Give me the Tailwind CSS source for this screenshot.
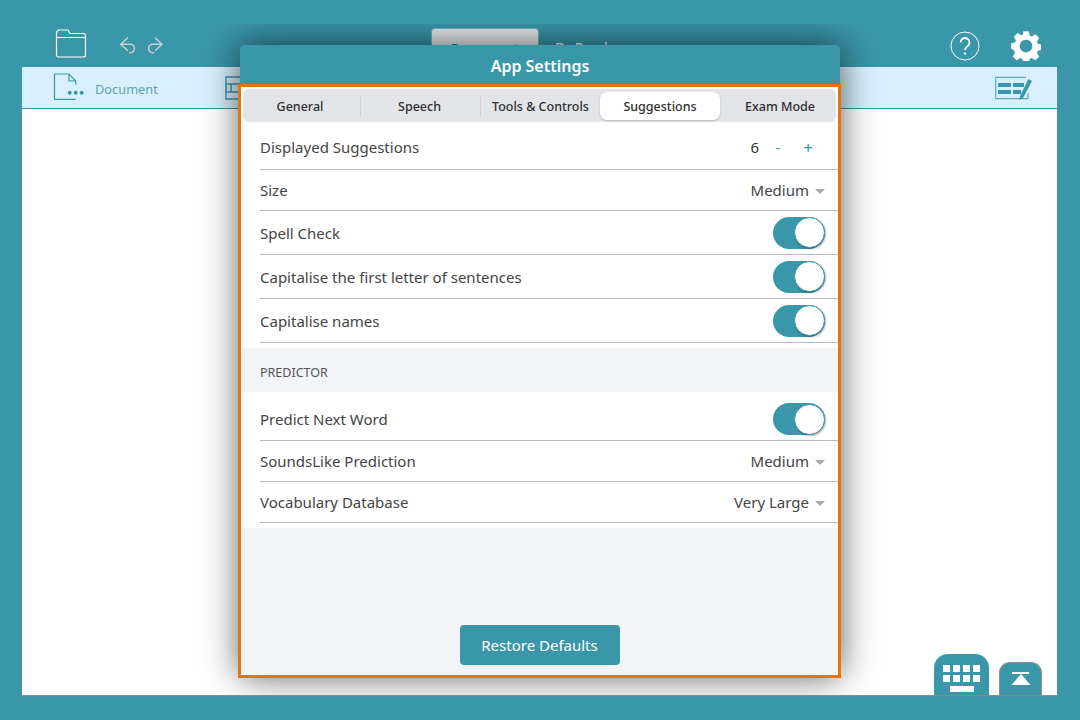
<!DOCTYPE html>
<html lang="en">
<head>
    <meta charset="UTF-8">
    <meta name="viewport" content="width=device-width, initial-scale=1.0">
    <title>App Settings</title>
    <script src="https://cdn.jsdelivr.net/npm/@tailwindcss/browser@4"></script>
</head>
<body class="relative w-[1080px] h-[720px] overflow-hidden bg-[#3a96a9] font-['Noto_Sans','Open_Sans',sans-serif]">
    <!-- App behind the dialog -->
    <header class="h-[67px] flex items-start relative">
        <svg class="absolute left-[55px] top-[29px]" width="32" height="29" viewBox="0 0 32 29" fill="none" stroke="#fff" stroke-width="1.200">
            <path d="M1.500 26V4a3 3 0 0 1 3-3h8.500l2 3.500h13.500a2 2 0 0 1 2 2V26a2 2 0 0 1-2 2h-25a2 2 0 0 1-2-2zM1.500 8.500h29"/>
        </svg>
        <svg class="absolute left-[119px] top-[36px]" width="46" height="18" viewBox="0 0 46 18" fill="none" stroke="#c5cfd3" stroke-width="1.500">
            <path d="M9 1.700 1.700 8.300 9 14.700M1.700 8.300H12a4.300 4.300 0 0 1 0 8.400h-2"/>
            <path d="M36 1.700l7 6.600-7 6.400M43 8.300H33a4.300 4.300 0 0 0 0 8.400h2"/>
        </svg>
        <div class="absolute left-[431px] top-[28px] w-[108px] h-[30px] rounded-t-[4px] border border-[#66b9c4] bg-[#e8ebee] text-center text-[14px] text-[#2a7c90] pt-[9px]">Document</div>
        <div class="absolute left-[555px] top-[37px] text-[14px] text-white">Dr Read</div>
        <svg class="absolute left-[950px] top-[31px]" width="30" height="30" viewBox="0 0 30 30" fill="none">
            <circle cx="15" cy="15" r="14" stroke="#fff" stroke-width="1"/>
            <path d="M10.500 11.500a4.500 4.500 0 1 1 6.800 3.900c-1.500.9-2.300 1.700-2.300 3.600" stroke="#fff" stroke-width="1.800"/>
            <circle cx="15" cy="22.500" r="1.200" fill="#fff"/>
        </svg>
        <svg class="absolute left-[1011px] top-[31px]" width="30" height="30" viewBox="0 0 24 24" fill="#fff" stroke="#fff" stroke-width="0.500" stroke-linejoin="round">
            <path fill-rule="evenodd" d="M10 .5h4l.7 3.300 1.900.8 2.900-1.800 2.800 2.800-1.800 2.900.8 1.900 3.200.7v3.800l-3.200.7-.8 1.900 1.800 2.900-2.800 2.800-2.900-1.800-1.900.8-.7 3.200h-4l-.7-3.200-1.900-.8-2.900 1.800-2.800-2.800 1.800-2.900-.8-1.900L.2 13.900v-3.800l3.200-.7.8-1.900L2.400 4.600l2.800-2.800 2.900 1.800 1.900-.8zM12 6.700a5.300 5.300 0 1 0 0 10.600 5.300 5.300 0 0 0 0-10.600z"/>
        </svg>
    </header>

    <main class="mx-[22px] w-[1035px] h-[628px] bg-white flex flex-col shadow-[0_1px_1px_#8a8a8a]">
        <div class="h-[42px] shrink-0 bg-[#d8f0fd] border-b border-[#3a96a9] flex items-center relative">
            <svg class="absolute left-[31px] top-[6px]" width="32" height="27" viewBox="0 0 32 27" fill="none" stroke="#3a96a9" stroke-width="1.200">
                <path d="M22.700 26.300H1.500V1H16l6.700 7v3.500M16 1v7h6.700"/>
                <circle cx="16.700" cy="19.700" r="2" fill="#3a96a9" stroke="none"/>
                <circle cx="22.700" cy="19.700" r="2" fill="#3a96a9" stroke="none"/>
                <circle cx="28.700" cy="19.700" r="2" fill="#3a96a9" stroke="none"/>
            </svg>
            <span class="absolute left-[73px] top-[13px] text-[12.800px] leading-[18px] text-[#5fa3b2]">Document</span>
            <svg class="absolute left-[203px] top-[9px]" width="20" height="24" viewBox="0 0 20 24" fill="none" stroke="#3a96a9" stroke-width="1.500">
                <path d="M1 1h18v22H1zM1 8h18M1 16h18M6 8v8"/>
            </svg>
            <svg class="absolute left-[973px] top-[9px]" width="38" height="25" viewBox="0 0 38 25" fill="none">
                <path d="M31 1.300H.7v21.400H33V17" stroke="#5fa9b8" stroke-width="1.200"/>
                <path d="M3 7h13v4H3zM18 7h11v4H18zM3 14h13v4H3zM18 14h8v4h-8z" fill="#3a96a9"/>
                <path d="M33.500 3l3.500 2-9 17-3.500 2 .5-4z" fill="#3a96a9"/>
            </svg>
        </div>
        <div class="flex-1"></div>
    </main>

    <div class="absolute left-[934px] bottom-[25px] w-[55px] h-[41px] rounded-t-[14px] bg-[#3a96a9] flex flex-col items-center pt-[11px] gap-[3px]">
        <div class="grid grid-cols-4 gap-[3px]">
            <i class="w-[7px] h-[7px] bg-white"></i><i class="w-[7px] h-[7px] bg-white"></i><i class="w-[7px] h-[7px] bg-white"></i><i class="w-[7px] h-[7px] bg-white"></i>
            <i class="w-[7px] h-[7px] bg-white"></i><i class="w-[7px] h-[7px] bg-white"></i><i class="w-[7px] h-[7px] bg-white"></i><i class="w-[7px] h-[7px] bg-white"></i>
        </div>
        <i class="w-[24px] h-[6px] bg-white mt-[1px]"></i>
    </div>
    <div class="absolute left-[999px] bottom-[25px] w-[43px] h-[33px] rounded-t-[11px] bg-[#3a96a9] border border-b-0 border-[#8a8f93] flex flex-col items-center pt-[9px]">
        <i class="w-[17px] h-[2px] bg-white"></i>
        <svg width="20" height="11" viewBox="0 0 20 11"><path d="M10 0l9.500 11H.5z" fill="#fff"/></svg>
    </div>

    <!-- Settings dialog -->
    <div class="absolute left-0 top-[24px] w-[1080px] h-[671px] overflow-hidden">
        <section class="absolute left-[240px] top-[21px] w-[600px] h-[631px] rounded-[4px] bg-[#3a96a9] shadow-[0_0_36px_rgba(0,0,0,0.65)]">
            <h2 class="h-[39px] pt-[2px] flex items-center justify-center text-[16px] font-semibold text-white">App Settings</h2>
            <div class="absolute left-[-2px] top-[39px] w-[603px] h-[594px] border-[3px] border-[#e8720c] bg-[#f3f4f8] flex flex-col">
                <div class="bg-white pt-[2px] pl-[2px] pr-[2px]">
                    <nav class="h-[33px] rounded-[6px] bg-[#e3e4e8] flex items-center text-[12.500px] font-medium text-[#2f2f2f]">
                        <span class="w-[118px] pr-[3px] text-center border-r border-[#cfd0d4] h-[22px] leading-[24px]">General</span>
                        <span class="w-[120px] pr-[2px] text-center border-r border-[#cfd0d4] h-[22px] leading-[24px]">Speech</span>
                        <span class="w-[119px] text-center h-[22px] leading-[24px] whitespace-nowrap">Tools &amp; Controls</span>
                        <span class="w-[120px] h-[28px] leading-[30px] text-center bg-white rounded-[7px] shadow-[0_1px_2px_rgba(0,0,0,0.2)]">Suggestions</span>
                        <span class="w-[116px] pl-[4px] h-[22px] leading-[24px] text-center whitespace-nowrap">Exam Mode</span>
                    </nav>
                </div>

                <div class="bg-white pl-[19px] text-[15px] text-[#444]">
                    <div class="h-[48px] pt-[4px] flex items-center border-b border-[#bbb] pr-[19px]">
                        <span class="flex-1">Displayed Suggestions</span>
                        <span class="text-[#333]">6</span>
                        <span class="w-[38px] text-center text-[#3a96a9]">-</span>
                        <span class="w-[22px] text-center text-[#3a96a9] text-[17px] leading-none">+</span>
                    </div>
                    <div class="h-[41px] flex items-center border-b border-[#bbb] pr-[13px]">
                        <span class="flex-1">Size</span>
                        <span>Medium</span>
                        <i class="ml-[6px] mt-[2px] w-0 h-0 border-x-[5px] border-t-[5px] border-x-transparent border-t-[#aaa]"></i>
                    </div>
                    <div class="h-[44px] flex items-center border-b border-[#bbb] pr-[13px]">
                        <span class="flex-1 pt-[2px]">Spell Check</span>
                        <div class="w-[52px] h-[32px] rounded-full bg-[#3a96a9] flex justify-end items-center"><i class="w-[31px] h-[31px] rounded-full bg-white border border-[#3a96a9] shadow-[1px_1px_2px_rgba(0,0,0,0.3)]"></i></div>
                    </div>
                    <div class="h-[44px] flex items-center border-b border-[#bbb] pr-[13px]">
                        <span class="flex-1 pt-[2px]">Capitalise the first letter of sentences</span>
                        <div class="w-[52px] h-[32px] rounded-full bg-[#3a96a9] flex justify-end items-center"><i class="w-[31px] h-[31px] rounded-full bg-white border border-[#3a96a9] shadow-[1px_1px_2px_rgba(0,0,0,0.3)]"></i></div>
                    </div>
                    <div class="h-[44px] flex items-center border-b border-[#bbb] pr-[13px]">
                        <span class="flex-1 pt-[2px]">Capitalise names</span>
                        <div class="w-[52px] h-[32px] rounded-full bg-[#3a96a9] flex justify-end items-center"><i class="w-[31px] h-[31px] rounded-full bg-white border border-[#3a96a9] shadow-[1px_1px_2px_rgba(0,0,0,0.3)]"></i></div>
                    </div>
                    <div class="h-[5px]"></div>
                </div>

                <div class="h-[44px] pl-[19px] pt-[16px] text-[12.500px] leading-[18px] text-[#555]">PREDICTOR</div>

                <div class="bg-white pl-[19px] text-[15px] text-[#444]">
                    <div class="h-[49px] pt-[6px] flex items-center border-b border-[#bbb] pr-[13px]">
                        <span class="flex-1">Predict Next Word</span>
                        <div class="w-[52px] h-[32px] rounded-full bg-[#3a96a9] flex justify-end items-center"><i class="w-[31px] h-[31px] rounded-full bg-white border border-[#3a96a9] shadow-[1px_1px_2px_rgba(0,0,0,0.3)]"></i></div>
                    </div>
                    <div class="h-[41px] flex items-center border-b border-[#bbb] pr-[13px]">
                        <span class="flex-1">SoundsLike Prediction</span>
                        <span>Medium</span>
                        <i class="ml-[6px] mt-[2px] w-0 h-0 border-x-[5px] border-t-[5px] border-x-transparent border-t-[#aaa]"></i>
                    </div>
                    <div class="h-[41px] flex items-center border-b border-[#bbb] pr-[13px]">
                        <span class="flex-1">Vocabulary Database</span>
                        <span>Very Large</span>
                        <i class="ml-[6px] mt-[2px] w-0 h-0 border-x-[5px] border-t-[5px] border-x-transparent border-t-[#aaa]"></i>
                    </div>
                    <div class="h-[5px]"></div>
                </div>

                <div class="flex-1 flex items-end justify-center pb-[10px]">
                    <button class="w-[160px] h-[40px] rounded-[4px] bg-[#3a96a9] text-[15px] text-white">Restore Defaults</button>
                </div>
            </div>
        </section>
    </div>
</body>
</html>
